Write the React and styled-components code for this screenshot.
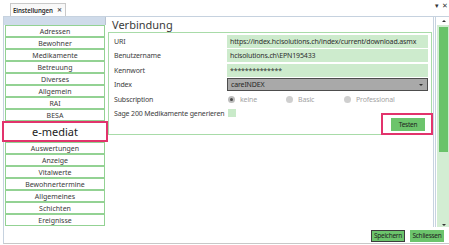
import React from "react";
import styled, { createGlobalStyle } from "styled-components";

const GlobalStyle = createGlobalStyle`
  html, body {
    margin: 0;
    padding: 0;
    background: #ffffff;
    overflow: hidden;
  }
  * {
    box-sizing: border-box;
  }
`;

const Window = styled.div`
  width: 449px;
  height: 245px;
  background: #ffffff;
  font-family: "Noto Sans", "Open Sans", sans-serif;
  color: #333333;
  display: flex;
  flex-direction: column;
`;

const TopBar = styled.div`
  height: 16px;
  display: flex;
  align-items: flex-end;
  padding-left: 10px;
`;

const Tab = styled.div`
  height: 13px;
  border: 1px solid #c9c9c9;
  border-bottom: none;
  background: linear-gradient(#f7f7f7, #ffffff);
  display: flex;
  align-items: center;
  gap: 4px;
  padding: 0 3px 0 2px;
  font-size: 6.2px;
  font-weight: 600;
  letter-spacing: -0.1px;
  color: #2b2b2b;
  white-space: nowrap;
`;

const TabClose = styled.span`
  font-size: 6px;
  font-weight: 700;
  color: #555;
`;

const WindowControls = styled.div`
  margin-left: auto;
  align-self: flex-start;
  margin-top: 1px;
  display: flex;
  gap: 3px;
  font-size: 7px;
  color: #333;
  line-height: 9px;
  padding-right: 1px;
`;

const Panel = styled.div`
  height: 228px;
  margin-left: 3px;
  border-top: 1px solid #c6d2df;
  border-left: 1px solid #c6d2df;
  border-bottom: 1px solid #c8c8c8;
  display: flex;
  flex-direction: column;
`;

const MainRow = styled.div`
  height: 210px;
  display: flex;
`;

const Nav = styled.div`
  width: 102px;
  display: flex;
  flex-direction: column;
`;

const NavStrip = styled.div`
  height: 8px;
  background: #cfdbea;
  border-right: 1px solid #b9c4d0;
`;

const NavList = styled.div`
  display: flex;
  flex-direction: column;
  padding-left: 1px;
  width: 101px;
`;

const NavItem = styled.div`
  height: ${(p) => (p.$active ? "21px" : "12px")};
  margin: ${(p) => (p.$active ? "0 -3px" : "0")};
  border: ${(p) => (p.$active ? "2px solid #e2336c" : "1px solid #93d293")};
  background: #ffffff;
  display: flex;
  align-items: center;
  justify-content: center;
  font-size: ${(p) => (p.$active ? "11px" : "7px")};
  color: ${(p) => (p.$active ? "#222" : "#3a3a3a")};
  white-space: nowrap;
  line-height: 1;
`;

const Content = styled.div`
  flex: 1;
  display: flex;
  flex-direction: column;
  padding-left: 2px;
  border-right: 3px double #c7d3e0;
`;

const Title = styled.div`
  height: 15px;
  line-height: 15px;
  padding-left: 4px;
  font-size: 11px;
  color: #3a3a3a;
`;

const GroupBox = styled.div`
  margin-right: 1px;
  border: 1px solid #a8dba8;
  padding: 2px 3px 0 5px;
  display: flex;
  flex-direction: column;
`;

const FormGrid = styled.div`
  display: grid;
  grid-template-columns: 113px 1fr;
  grid-auto-rows: 13px;
  row-gap: 1.4px;
  font-size: 7px;
  letter-spacing: -0.15px;
`;

const Label = styled.div`
  line-height: 13px;
  color: #3d3d3d;
  white-space: nowrap;
`;

const Field = styled.div`
  background: #cdebcd;
  line-height: 13px;
  padding-left: 3px;
  color: #2e2e2e;
  white-space: nowrap;
  overflow: hidden;
`;

const Combo = styled.div`
  background: #a9a9a9;
  border: 1px solid #4d4d4d;
  line-height: 11px;
  padding: 0 4px 0 3px;
  color: #262626;
  display: flex;
  justify-content: space-between;
  align-items: center;
`;

const ComboArrow = styled.span`
  width: 0;
  height: 0;
  border-left: 2px solid transparent;
  border-right: 2px solid transparent;
  border-top: 2px solid #333;
`;

const RadioRow = styled.div`
  display: flex;
  align-items: center;
  padding-left: 1px;
`;

const RadioOption = styled.div`
  width: 58px;
  display: flex;
  align-items: center;
  gap: 5px;
  color: #a3a3a3;
`;

const RadioDot = styled.span`
  width: 7px;
  height: 7px;
  border-radius: 50%;
  background: ${(p) => (p.$checked ? "#bdbdbd" : "#cfcfcf")};
  display: flex;
  align-items: center;
  justify-content: center;
  &::after {
    content: "";
    width: 3px;
    height: 3px;
    border-radius: 50%;
    background: ${(p) => (p.$checked ? "#4a4a4a" : "transparent")};
  }
`;

const CheckCell = styled.div`
  display: flex;
  align-items: center;
  padding-left: 1px;
`;

const CheckBox = styled.span`
  width: 8px;
  height: 8px;
  background: #c9eac9;
`;

const ActionRow = styled.div`
  display: flex;
  justify-content: flex-end;
  margin-top: -7px;
  margin-right: -5px;
  margin-bottom: -1px;
`;

const Highlight = styled.div`
  border: 2px solid #e2336c;
  padding: 3px 6px 2px 8px;
`;

const GreenButton = styled.div`
  width: 34px;
  height: ${(p) => (p.$tall ? "13px" : "12px")};
  background: #6cc46c;
  border: 1px solid ${(p) => (p.$focused ? "#3d3d3d" : "#6cc46c")};
  display: flex;
  align-items: center;
  justify-content: center;
  font-size: 6.5px;
  color: #1f1f1f;
  white-space: nowrap;
  letter-spacing: -0.25px;
`;

const ScrollBar = styled.div`
  width: 13px;
  display: flex;
  flex-direction: column;
`;

const ScrollArrow = styled.div`
  height: ${(p) => (p.$down ? "5px" : "8px")};
  display: flex;
  align-items: center;
  justify-content: center;
  padding-left: 1px;
  background: ${(p) => (p.$down ? "#d3edd3" : "#ffffff")};
  margin-left: 1px;
  &::after {
    content: "";
    width: 0;
    height: 0;
    border-left: 2px solid transparent;
    border-right: 2px solid transparent;
    ${(p) =>
      p.$down
        ? "border-top: 2px solid #333;"
        : "border-bottom: 2px solid #333;"}
  }
`;

const Track = styled.div`
  flex: 1;
  margin-left: 1px;
  background: #d3edd3;
  padding: 2px 1px 0 2px;
`;

const Thumb = styled.div`
  height: 125px;
  background: #6ac36a;
`;

const Footer = styled.div`
  flex: 1;
  display: flex;
  justify-content: flex-end;
  align-items: center;
  gap: 5px;
  padding-right: 5px;
  padding-top: 1px;
`;

const navItems = [
  "Adressen",
  "Bewohner",
  "Medikamente",
  "Betreuung",
  "Diverses",
  "Allgemein",
  "RAI",
  "BESA",
  "e-mediat",
  "Auswertungen",
  "Anzeige",
  "Vitalwerte",
  "Bewohnertermine",
  "Allgemeines",
  "Schichten",
  "Ereignisse",
];

const subscriptions = [
  { label: "keine", checked: true },
  { label: "Basic", checked: false },
  { label: "Professional", checked: false },
];

export default function App() {
  return (
    <>
      <GlobalStyle />
      <Window>
        <TopBar>
          <Tab>
            Einstellungen
            <TabClose>✕</TabClose>
          </Tab>
          <WindowControls>
            <span>▾</span>
            <span>✕</span>
          </WindowControls>
        </TopBar>
        <Panel>
          <MainRow>
            <Nav>
              <NavStrip />
              <NavList>
                {navItems.map((item) => (
                  <NavItem key={item} $active={item === "e-mediat"}>
                    {item}
                  </NavItem>
                ))}
              </NavList>
            </Nav>
            <Content>
              <Title>Verbindung</Title>
              <GroupBox>
                <FormGrid>
                  <Label>URI</Label>
                  <Field>https://index.hcisolutions.ch/index/current/download.asmx</Field>
                  <Label>Benutzername</Label>
                  <Field>hcisolutions.ch\EPN195433</Field>
                  <Label>Kennwort</Label>
                  <Field>**************</Field>
                  <Label>Index</Label>
                  <Combo>
                    careINDEX
                    <ComboArrow />
                  </Combo>
                  <Label>Subscription</Label>
                  <RadioRow>
                    {subscriptions.map((s) => (
                      <RadioOption key={s.label}>
                        <RadioDot $checked={s.checked} />
                        {s.label}
                      </RadioOption>
                    ))}
                  </RadioRow>
                  <Label>Sage 200 Medikamente generieren</Label>
                  <CheckCell>
                    <CheckBox />
                  </CheckCell>
                </FormGrid>
                <ActionRow>
                  <Highlight>
                    <GreenButton $tall>Testen</GreenButton>
                  </Highlight>
                </ActionRow>
              </GroupBox>
            </Content>
            <ScrollBar>
              <ScrollArrow />
              <Track>
                <Thumb />
              </Track>
              <ScrollArrow $down />
            </ScrollBar>
          </MainRow>
          <Footer>
            <GreenButton $focused>Speichern</GreenButton>
            <GreenButton>Schliessen</GreenButton>
          </Footer>
        </Panel>
      </Window>
    </>
  );
}
